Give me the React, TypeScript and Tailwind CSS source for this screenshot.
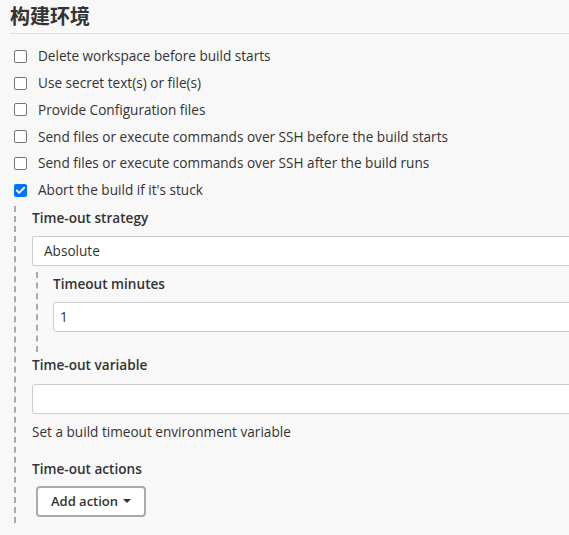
import { Check } from 'lucide-react';

const font = { fontFamily: '"Open Sans", "Noto Sans CJK SC", sans-serif' };

function Box({ checked, label }: { checked?: boolean; label: string }) {
  return (
    <div className="flex items-center h-[26.8px]">
      <span
        className={
          checked
            ? 'ml-[14px] w-[13px] h-[13px] rounded-[2px] bg-[#0075ff] flex items-center justify-center'
            : 'ml-[14px] w-[13px] h-[13px] rounded-[2px] border border-[#767676] bg-white'
        }
      >
        {checked && <Check className="w-[11px] h-[11px] text-white" strokeWidth={4} />}
      </span>
      <span className="ml-[11px] text-[13.6px] text-[#333]">{label}</span>
    </div>
  );
}

export default function App() {
  return (
    <div className="w-[569px] h-[535px] overflow-hidden bg-[#f8f8f8] text-[#333]" style={font}>
      <div className="pl-[10px] pt-[3px]">
        <h2 className="text-[20px] font-bold leading-[28px] text-[#333] border-b border-[#ddd] pb-[2px]">
          构建环境
        </h2>
      </div>
      <div className="pt-[9px]">
        <Box label="Delete workspace before build starts" />
        <Box label="Use secret text(s) or file(s)" />
        <Box label="Provide Configuration files" />
        <Box label="Send files or execute commands over SSH before the build starts" />
        <Box label="Send files or execute commands over SSH after the build runs" />
        <Box checked label="Abort the build if it's stuck" />
      </div>
      <div className="ml-[14px] mt-[2px] border-l-2 border-dashed border-[#aaa] pl-[16px] pt-[2px] pb-[6px]">
        <div className="text-[13.6px] font-semibold leading-[20px]">Time-out strategy</div>
        <div className="mt-[8px] h-[30px] w-[600px] bg-white border border-[#ccc] rounded-[2px] flex items-center pl-[11px] text-[13.6px]">
          Absolute
        </div>
        <div className="ml-[4px] mt-[6px] border-l-2 border-dashed border-[#aaa] pl-[15px] pt-[2px] pb-[20px]">
          <div className="text-[13.6px] font-semibold leading-[20px]">Timeout minutes</div>
          <div className="mt-[8px] h-[30px] w-[600px] bg-white border border-[#ccc] rounded-[3px] flex items-center pl-[6px] text-[13.6px]">
            1
          </div>
        </div>
        <div className="mt-[3px] text-[13.6px] font-semibold leading-[20px]">Time-out variable</div>
        <div className="mt-[9px] h-[30px] w-[600px] bg-white border border-[#ccc] rounded-[3px]" />
        <div className="mt-[8px] text-[13.6px] leading-[20px]">Set a build timeout environment variable</div>
        <div className="mt-[17px] text-[13.6px] font-semibold leading-[20px]">Time-out actions</div>
        <button className="ml-[4px] mt-[7px] h-[31px] w-[110px] bg-white border-2 border-[#aaa] rounded-[4px] text-[13px] font-semibold flex items-center justify-center gap-[5px]">
          Add action
          <span className="w-0 h-0 border-l-[4px] border-r-[4px] border-t-[4px] border-l-transparent border-r-transparent border-t-[#333]" />
        </button>
      </div>
    </div>
  );
}
